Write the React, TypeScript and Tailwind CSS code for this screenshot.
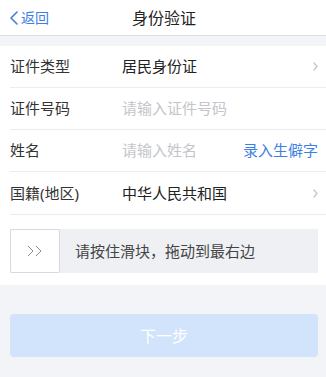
import React from 'react';

const ChevronRight: React.FC = () => (
  <svg width="5" height="9" viewBox="0 0 5 9" fill="none">
    <path d="M1 1l3 3.5L1 8" stroke="#c7c7cc" strokeWidth="1.4" strokeLinecap="round" strokeLinejoin="round" />
  </svg>
);

const App: React.FC = () => {
  const font = { fontFamily: '"Noto Sans", "Noto Sans CJK SC", sans-serif' };

  return (
    <div className="w-[326px] h-[377px] bg-[#f3f4f8] flex flex-col" style={font}>
      {/* Header */}
      <div className="h-[36px] bg-white border-b border-[#dcdde0] flex items-center relative shrink-0">
        <div className="flex items-center pl-[9px] text-[#3d7fe6] text-[14px]">
          <svg width="10" height="16" viewBox="0 0 10 16" fill="none" className="mr-[2px]">
            <path d="M8 2L2 8l6 6" stroke="#3d7fe6" strokeWidth="1.6" strokeLinecap="round" strokeLinejoin="round" />
          </svg>
          <span>返回</span>
        </div>
        <div className="absolute inset-x-0 text-center text-[16px] text-[#222] pointer-events-none pl-[2px]">身份验证</div>
      </div>

      <div className="h-[10px] shrink-0" />

      {/* Form */}
      <div className="bg-white pl-[10px] shrink-0">
        <div className="h-[42px] flex items-center border-b border-[#ececef] text-[15px]">
          <span className="w-[112px] text-[#333]">证件类型</span>
          <span className="flex-1 text-[#222]">居民身份证</span>
          <span className="pr-[8px] flex"><ChevronRight /></span>
        </div>
        <div className="h-[42px] flex items-center border-b border-[#ececef] text-[15px]">
          <span className="w-[112px] text-[#333]">证件号码</span>
          <span className="flex-1 text-[#c4c5ca]">请输入证件号码</span>
        </div>
        <div className="h-[42px] flex items-center border-b border-[#ececef] text-[15px]">
          <span className="w-[112px] text-[#333]">姓名</span>
          <span className="flex-1 text-[#c4c5ca]">请输入姓名</span>
          <span className="pr-[8px] text-[#3d7fe6]">录入生僻字</span>
        </div>
        <div className="h-[43px] flex items-center border-b border-[#ececef] text-[15px]">
          <span className="w-[112px] text-[#333]">国籍(地区)</span>
          <span className="flex-1 text-[#222]">中华人民共和国</span>
          <span className="pr-[8px] flex"><ChevronRight /></span>
        </div>

        {/* Slider */}
        <div className="pt-[14px] pb-[12px] pr-[8px]">
          <div className="h-[44px] bg-[#eef0f4] flex items-center">
            <div className="w-[50px] h-[44px] bg-white border border-[#d8d9dc] rounded-[2px] flex items-center justify-center shrink-0">
              <svg width="18" height="12" viewBox="0 0 18 12" fill="none">
                <path d="M2 1l5 5-5 5M10 1l5 5-5 5" stroke="#8a8b90" strokeWidth="1" strokeLinejoin="round" />
              </svg>
            </div>
            <span className="ml-[15px] text-[15px] text-[#444]">请按住滑块，拖动到最右边</span>
          </div>
        </div>
      </div>

      {/* Next button */}
      <div className="pl-[10px] pr-[8px] pt-[29px]">
        <div className="h-[43px] rounded-[4px] bg-[#d1e4fb] flex items-center justify-center text-white text-[16px]">
          下一步
        </div>
      </div>
    </div>
  );
};

export default App;
